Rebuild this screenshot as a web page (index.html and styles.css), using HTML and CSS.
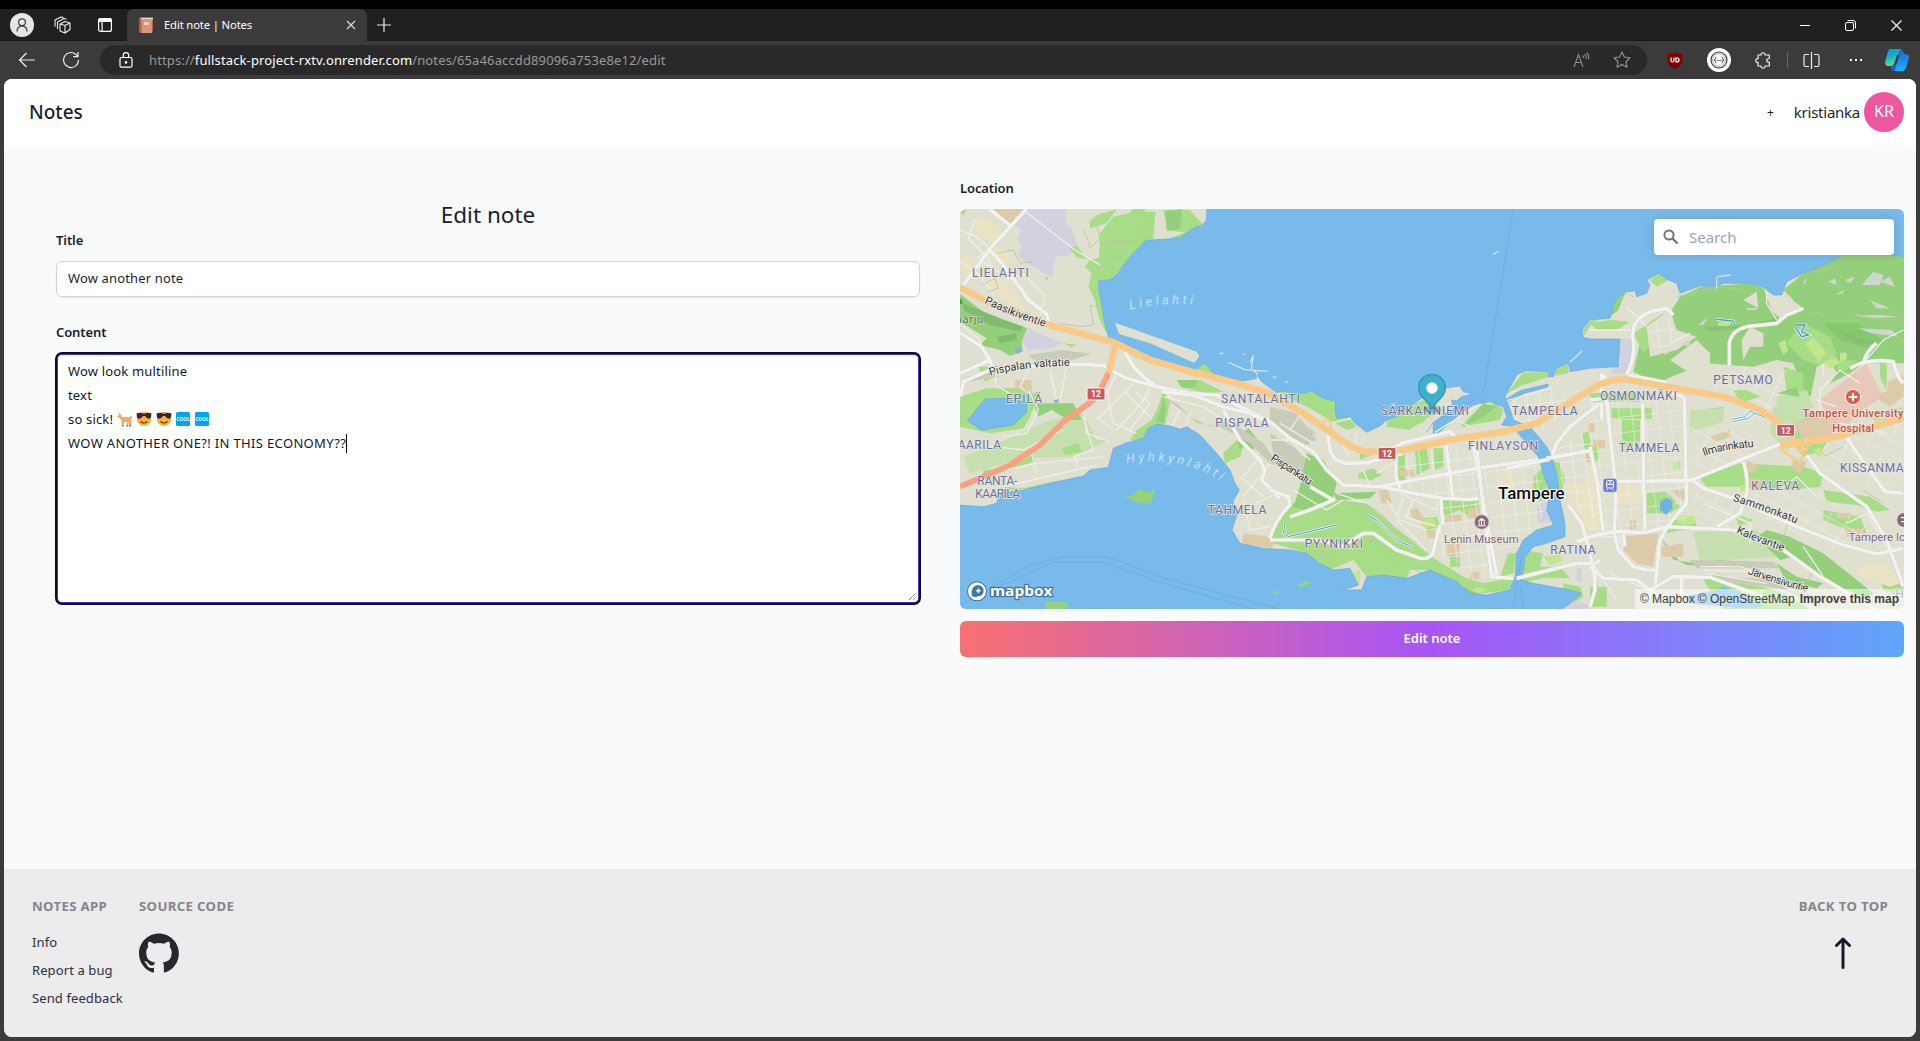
FILE: index.html
```html
<!DOCTYPE html>
<html lang="en">
<head>
<meta charset="utf-8">
<title>Edit note | Notes</title>
<link rel="stylesheet" href="styles.css">
</head>
<body>
<div class="tabstrip">
  <span class="slot s43"><svg width="24" height="24" viewBox="0 0 24 24"><circle cx="12" cy="12" r="12" fill="#e6e6e6"/><g fill="none" stroke="#444" stroke-width="1.3"><circle cx="12" cy="9.3" r="3.4"/><path d="M7 18.5c0-3.5 2-5.3 5-5.3s5 1.800 5 5.300"/></g></svg></span>
  <span class="slot s39"><svg width="17" height="18" viewBox="0 0 17 18" fill="none" stroke="#eee" stroke-width="1.1" stroke-linejoin="round"><path d="M6 8l5 1.500 5-2.500v6.500L11 17l-5-2zM11 9.500V17M6 8l5-2.500L16 7"/><path d="M3.500 13V6L10 2.500l2.500.8M1 10.500V4L7 1l2.500.6"/></svg></span>
  <span class="slot s45"><svg width="16" height="16" viewBox="0 0 16 16"><rect x="1.600" y="1.600" width="12.800" height="12.800" rx="2" fill="none" stroke="#fff" stroke-width="1.200"/><path d="M1 3.500Q1 1 3.500 1h9Q15 1 15 3.500V5H1zM4.500 4h1.200v10.500H4.500z" fill="#fff"/></svg></span>
  <div class="tab">
    <svg width="16" height="16" viewBox="0 0 16 16"><path d="M1 2Q1 0 3 0h12v13l-1 3H3q-2 0-2-2z" fill="#bd5b45"/><path d="M3 1h12v1.500H3z" fill="#e7e0e3"/><path d="M3.500 2.500H14V16H3.500z" fill="#d99678"/><path d="M6 5.500h5v2.200H6z" fill="#f7ece5"/></svg>
    <span class="tab-title">Edit note | Notes</span>
    <svg width="10" height="10" viewBox="0 0 10 10"><path d="M1 1l8 8M9 1L1 9" stroke="#ddd" stroke-width="1.100"/></svg>
  </div>
  <span class="slot s34"><svg width="14" height="14" viewBox="0 0 14 14"><path d="M7 0v14M0 7h14" stroke="#eee" stroke-width="1.200"/></svg></span>
  <span class="grow"></span>
  <span class="slot s46"><svg width="10" height="10" viewBox="0 0 10 10"><path d="M0 5.500h10" stroke="#fff"/></svg></span>
  <span class="slot s45"><svg width="11" height="11" viewBox="0 0 11 11" fill="none" stroke="#fff"><rect x=".5" y="2.500" width="8" height="8" rx="1.500"/><path d="M2.500.5H8Q10.500.5 10.500 3v5.500"/></svg></span>
  <span class="slot s47"><svg width="11" height="11" viewBox="0 0 11 11"><path d="M.5.5l10 10M10.500.5l-10 10" stroke="#fff" stroke-width="1.100"/></svg></span>
</div>
<div class="toolbar">
  <span class="slot s44"><svg width="18" height="16" viewBox="0 0 18 16" fill="none" stroke="#eee" stroke-width="1.200"><path d="M17 8H1.500M8.500 1L1.500 8l7 7"/></svg></span>
  <span class="slot s44"><svg width="18" height="18" viewBox="0 0 18 18" fill="none" stroke="#eee" stroke-width="1.200"><path d="M16.500 9a7.500 7.500 0 1 1-2.800-5.800L16 5.400M16 1v4.600h-4.800"/></svg></span>
  <div class="url">
    <svg width="14" height="16" viewBox="0 0 14 16" fill="none" stroke="#fff" stroke-width="1.200"><rect x="1" y="5.500" width="12" height="9.700" rx="1.500"/><path d="M4.300 5.500V3.300a2.700 2.700 0 0 1 5.400 0v2.200"/><circle cx="7" cy="10.400" r=".7" fill="#fff"/></svg>
    <span class="url-text">https://<b>fullstack-project-rxtv.onrender.com</b>/notes/65a46accdd89096a753e8e12/edit</span>
    <span class="grow"></span>
    <svg class="read" width="17" height="16" viewBox="0 0 17 16" fill="none" stroke="#8e8e8e" stroke-width="1.100"><path d="M1 15L5.500 2.500 10 15M2.700 10.500h5.700M9.500 3.500q1.300 1 1.300 2.800M11.500 2q2 1.600 1.900 4.800M13.600.7q2.500 2.200 2.200 6.800"/></svg>
    <svg class="star" width="18" height="18" viewBox="0 0 18 18" fill="none" stroke="#8e8e8e" stroke-width="1.200" stroke-linejoin="round"><path d="M9 1l2.400 5 5.600.8-4 3.900 1 5.600-5-2.700-5 2.700 1-5.600-4-3.900L6.600 6z"/></svg>
  </div>
  <span class="slot s45"><svg width="16" height="17" viewBox="0 0 16 17"><path d="M8 0c2 1.400 4.500 2 7.500 2v6c0 4-3 7-7.500 9C3.500 15 .5 12 .5 8V2C3.500 2 6 1.400 8 0z" fill="#800000"/><path d="M4 5.500v3q0 1.500 1.500 1.500T7 8.500v-3M9 6v4h1q2 0 2-2t-2-2z" fill="none" stroke="#fff" stroke-width="1.200"/></svg></span>
  <span class="slot s44"><svg width="26" height="26" viewBox="0 0 26 26"><circle cx="13" cy="13" r="12" fill="#fff"/><g fill="none" stroke="#333" stroke-width="1.100"><circle cx="13" cy="13" r="8"/><circle cx="13" cy="13" r="6.300" stroke-width=".4"/><path d="M10.400 10q-1 0-1 1.500T8 13q1.400 0 1.400 1.500t1 1.500M15.600 10q1 0 1 1.500T18 13q-1.400 0-1.400 1.500t-1 1.500" stroke-width=".9"/></g><path d="M11 13.500h4.600" stroke="#333" stroke-dasharray="1 .7"/></svg></span>
  <span class="slot s44"><svg width="16" height="17" viewBox="0 0 16 17" fill="none" stroke="#eee" stroke-width="1.200"><path d="M3 3h3c-.5-3 4.500-3 4 0h4.300v3.500c-3.500-.2-3.500 4 0 3.900V14H10c.5 3-4.500 3-4 0H3v-3.500C0 11 0 6.200 3 6.700z"/></svg></span>
  <i class="sep"></i>
  <span class="slot s44"><svg width="17" height="17" viewBox="0 0 17 17" fill="none" stroke="#eee" stroke-width="1.200"><path d="M8.500 0v17M6 2.500H2.500Q1 2.500 1 4v9q0 1.500 1.500 1.500H6M11 2.500h3.500Q16 2.500 16 4v9q0 1.500-1.500 1.500H11"/></svg></span>
  <span class="slot s45"><svg width="14" height="4" viewBox="0 0 14 4" fill="#eee"><circle cx="2" cy="2" r="1.200"/><circle cx="7" cy="2" r="1.200"/><circle cx="12" cy="2" r="1.200"/></svg></span>
  <span class="slot s38"><svg width="24" height="24" viewBox="0 0 24 24">
    <defs><linearGradient id="ca" x2=".3" y2="1"><stop offset="0" stop-color="#1593d0"/><stop offset=".5" stop-color="#12b3cc"/><stop offset="1" stop-color="#63db87"/></linearGradient><linearGradient id="cb" x2="0" y2="1"><stop offset="0" stop-color="#2670d8"/><stop offset="1" stop-color="#11b5ff"/></linearGradient></defs>
    <path d="M5 1h9q3 0 4 4l-6 2-3 9q-1 2-3 2H3q-3 0-3-4L3 4q.5-3 2-3z" fill="url(#ca)"/><path d="M15 1q3 0 4 5h-6z" fill="#1c72be"/><path d="M15 6h6q3 0 3 4l-3 10q-1 3-3 3H9q-2 0-3-5h2q3 0 4-3z" fill="url(#cb)"/><path d="M6 18h5l-1 5H9q-2 0-3-5z" fill="#2257dc"/></svg></span>
</div>
<div class="page">
  <header class="nav">
    <h1>Notes</h1>
    <span class="grow"></span>
    <span class="add">+</span>
    <span class="user">kristianka</span>
    <span class="avatar">KR</span>
  </header>
  <main class="main">
    <section class="form">
      <h2>Edit note</h2>
      <label>Title</label>
      <div class="input">Wow another note</div>
      <label class="lc">Content</label>
      <div class="area">
        <p>Wow look multiline</p>
        <p>text</p>
        <p class="emo"><span>so sick!</span>
          <svg width="16" height="16" viewBox="0 0 16 16"><path d="M2 1q0 2 2 2.500L5 6h8l1.500-2L15 6l-1 3v6h-2v-4l-1 4H9.500l.5-4H7l-.5 4H5l-.7-6-1.600-2L0 6l2-2.500L1 1z" fill="#f0ad69"/><path d="M5 14h1.500v1.500H5zM9.500 14H11v1.500H9.500zM12 14h2v1.500h-2z" fill="#9d6a55"/></svg>
          <svg width="16" height="16" viewBox="0 0 16 16"><circle cx="8" cy="8" r="7.200" fill="#fdb32e"/><path d="M.5 2.500q4-1.500 7.500.5 3.500-2 7.500-.5l-.5 4q-3 3-6-1.500H7q-3 4.500-6 1.500z" fill="#38204a"/><path d="M4.500 10.500q3.500 3 7 0" fill="none" stroke="#5a3410" stroke-width="1.100"/></svg>
          <svg width="16" height="16" viewBox="0 0 16 16"><circle cx="8" cy="8" r="7.200" fill="#fdb32e"/><path d="M.5 2.500q4-1.500 7.500.5 3.500-2 7.500-.5l-.5 4q-3 3-6-1.500H7q-3 4.500-6 1.500z" fill="#38204a"/><path d="M4.500 10.500q3.500 3 7 0" fill="none" stroke="#5a3410" stroke-width="1.100"/></svg>
          <svg width="16" height="16" viewBox="0 0 16 16"><rect x="1" y="1" width="14" height="14" rx="1.500" fill="#00a5ef"/><text x="8" y="9.600" class="cool">COOL</text></svg>
          <svg width="16" height="16" viewBox="0 0 16 16"><rect x="1" y="1" width="14" height="14" rx="1.500" fill="#00a5ef"/><text x="8" y="9.600" class="cool">COOL</text></svg>
        </p>
        <p class="last">WOW ANOTHER ONE?! IN THIS ECONOMY??<i class="caret"></i></p>
        <svg class="grip" width="9" height="9" viewBox="0 0 9 9"><path d="M1 8l7-7M5 8l3-3" stroke="#777" stroke-width=".8"/></svg>
      </div>
    </section>
    <section class="loc">
      <label>Location</label>
      <div class="map">
<svg class="mapsvg" viewBox="0 0 2832 1200" preserveAspectRatio="none">
<defs>
<pattern id="grid" width="38" height="46" patternUnits="userSpaceOnUse" patternTransform="rotate(-7)"><path d="M0 0H38M0 0V46" stroke="#f0f0e9" stroke-width="4" fill="none"/></pattern>
<pattern id="grid2" width="54" height="42" patternUnits="userSpaceOnUse" patternTransform="rotate(28)"><path d="M0 0H54M0 0V42" stroke="#efefe8" stroke-width="4" fill="none"/></pattern>
</defs>
<rect width="2832" height="1200" fill="#dfe0d0"/>
<!-- western shore -->
<g transform="translate(-30 -117)">
  <path class="lav" d="M230 117H345L350 165 365 175 383 230 360 255 318 260 305 322 250 290 205 262 215 225 200 205 215 180 190 160ZM235 475L300 505 345 520 290 538 235 540 215 515Z"/>
  <path class="bei" d="M80 140L120 150 155 190 130 220 70 180ZM120 220l60 30 25 30-50 5-40-25zM100 310l60 20 50 60-20 20-80-60zM40 250l40 20-20 60-30-30zM190 385l40 30-20 15z"/>
  <path class="bro" d="M130 117H220L178 165ZM195 630h50v38h-50z"/>
  <path class="park" d="M450 190L490 140 540 128 550 117H585V125H617L609 208 587 211 545 255 518 288 505 310 480 330 447 331 446 360 455 400 490 408 458 412 470 480 480 510 445 440 435 390 415 350 425 310 405 290 420 270 447 265ZM418 155L440 135 500 118 470 160 420 175ZM357 233l25-5 30 40-30-5zM640 120l80 0 40 45-55 22-50-5zM660 205l100-40-20 15-45 25zM30 125l20-8-10 20zM735 598l30-20 30 38zM680 630l70 0 70 35-50 5-80-20zM340 520l40 5-15 7zM30 680l80-25 80 0 45 10v25H30zM85 590l40 0 20 25-40 20zM285 318l10 5-5 10z"/>
  <path class="wood" d="M30 372L100 425 232 475 215 515 218 545 180 558 150 540 90 525 110 505 30 455ZM645 125l50-8-5 60-40 5zM680 630l60 0 0 20-40 5z"/>
  <path d="M40 400l120 50 60 20-10 15-90-20-80-45zM140 500l60-10 0 20-50 10z" fill="#82bb6d"/>
  <path class="shade" d="M235 555l100-15 90 12-60 18-100 10zM50 620l80-12 20 12-90 14z"/>
  <path class="min" d="M30 180L80 200 118 235M75 145l-20 60 60 60 20 60M118 235l-35 30 90 60 50-10 60 60-10 60M220 120L375 240 450 285M30 275l60 40 40 60M170 335l30-40M30 460l60 50 20 60M140 595l-5 50 80 45M240 590l-30 60 50 40M300 600l20 90M350 590l-20 100M500 610l-40 80M550 640l-50 50M600 650l-20 40M640 660l30 30"/>
  <path class="trail" d="M400 175l15 40 5 20 30-30-10-40M480 220l30-5 15 30-30 25-15-30M480 210l80 5 10-40 40-20M330 460l60 10 40-5-10-60 30 10M95 345l40-20 10 30-30 10M140 250l50-10 20 40 40-5M440 265l70 35"/>
  <path class="road" d="M230 117L118 238 85 285 38 348M118 117L178 165M118 238L160 285 215 360 235 390 290 432 295 455"/>
  <path class="road" d="M30 488L95 530 120 570 125 590M30 610L120 570M30 690L40 635 120 600 360 582 460 586 500 610 530 625 620 650 720 670 800 675 990 770M525 545L550 590 580 620 620 650 720 672" stroke-width="8"/>
</g>
<g transform="translate(-30 543)">
  <path class="pale" d="M110 175L300 90 400 70 440 150 480 150 370 200 220 205 60 250 40 200Z"/>
  <path class="park" d="M30 20L90 10H270L240 80 220 115 120 130 30 110ZM640 0l20 40-15 65-30 0-30 45-45 0 15-25 50-35 20-40zM820 190l40-40 20 20-10 30-45 20zM160 290l60 5 110-25-60 25-100 5zM335 175l50-15 10 25-50 10zM100 240l60-5 90-40 0 20-90 30-60 20z"/>
  <path class="wood" d="M640 10l8 40-5 50-25-5 15-40zM865 140l30-25 25 30-10 35-25-10-20 5zM250 40l120 0 25 50-40 0-50-30-40 20z"/>
  <path class="min" d="M235 0L265 60 230 130 160 140M30 160l100 10 90 10 120-60M240 170l20 80M400 50l10 80 70 25M440 80l50 40M110 250l150-30 200-20M160 290L440 225M380 200v40M400 80l30 100-60 20M470 0l20 100 70 30M500 30l-60 60M520 0l80 80M600 10l-100 110M560 10l40 30-60 80M690 60l-30 60M720 70l-20 50M640 20l120 30 60 40M870 260l70 60M960 220l-80 100M880 330l20 90 60-10M900 350l80-40M930 200l-50 60"/>
  <path class="shade" d="M640 20l80 60 60 30 60-20 40 30 60 40 50 70-30-10-60-60-90-50-70-10-60-60z"/>
  <path class="road" d="M635 5L730 15 820 50 900 70 960 100 990 120M820 60L870 150 930 210 945 240 935 270 990 325" stroke-width="8"/>
  <path class="bro" d="M880 430l40 5 60 10-15 30-90-15z"/>
</g>
<!-- central Tampere -->
<g transform="translate(930 543)">
  <path class="shade" d="M0 50l80 20 60 80-40 20-100-80zM0 130l70 40 110 110 10 30-60-20-120-100zM0 60l50 10 90 60-30 5z"/>
  <path class="park" d="M20 0H190L200 40 260 110 230 120 180 90 120 55 50 20ZM60 340L190 330 290 340 360 400 460 480 500 510 580 560 640 580 740 560 720 600 600 615 560 575 480 540 420 540 410 565 290 560 250 510 180 540 110 490 10 460 0 440ZM350 80L420 40 480 30 520 60 440 100 420 120 350 110ZM570 110L630 50 680 40 700 60 690 90ZM380 190l25-15 0 95-20 5zM435 180l35-5 10 60-40 20zM490 175l30 0 0 55-25 10zM510 330h115l5 35-40 10-20-15-40 15h-15zM265 250l45-15 25 20-30 15-40-5zM460 385l40-5 10 30-40 10-15-20zM790 260l30-30 10 60-20 50-20-30zM840 210l30 10 15 50-20 60-15-50zM760 480l60 10-10 40 60 0 30 35-80 0-70 15zM880 580l50 10 10 30-30 20-30-30zM270 180l90-10-90 40zM540 500l30 0 0 30-30 0zM715 490l25 0-10 60-40 10zM965 170l20 0 0 40-20 10zM935 130l20-5 10 50-20 10z"/>
  <path class="wood" d="M110 190L160 210 200 280 190 320 120 365 70 350 90 290ZM430 540l70 20 100 40 60 0-60 15-60-30zM640 40l40 10-40 30-60 30zM190 310l130-5-20 20-100 5z"/>
  <path class="bro" d="M325 300h30l10 40h-30zM420 360l20-8 20 30-5 15-30-15zM470 420h25v25h-25zM525 375h50v22h-50zM595 355h35v30h-35zM530 460h38v38h-38zM600 545h28v22h-28zM945 185h25v30h-25zM955 105h22v20h-22zM388 240h45v18h-45z"/>
  <path class="bei" d="M700 235l20 5 20 60 30 5 0 30-50-10-30-40zM880 280l90-5 20 90-60 10-40-60zM930 370h60v60l-40-10z"/>
  <path class="lav" d="M800 345l35-10 10 60-40 5zM900 630l60 15-20 15h-60zM920 535h15v40h-15z"/>
  <path class="ltg" d="M455 390l35-5 10 20-35 10zM820 500l50-8 10 20-40 12zM250 545l20-5 0 40-15 10zM600 600l30-8 25 8-30 10z"/>
  <path d="M380 190L610 165 660 560 590 575 570 520 510 500 510 330 390 290ZM640 240L800 210 830 340 800 420 740 480 680 480Z" fill="url(#grid)"/>
  <path d="M870 150l100-40 20 280-60-20-60-100zM720 0h270l-100 60-90 80-80-60z" fill="url(#grid)"/>
  <path class="min" d="M200 140l40 60M260 130l-10 60M180 100l170-40M320 250l60-40M300 290l-20-50M390 310l110 50 10-30M350 330l40 60 80 30M400 320l-20 60M430 330l-20 50M200 310l90 30M400 380l100 30M380 390l90 90M560 90l40 20M70 300l100 60 50-30M0 150l60 0 60 60M30 100l100 60M100 60l-40 60"/>
  <path class="trail" d="M220 330l100 30 60 60 60 40M290 450l60 20 30 60M30 380l40-10M120 490l60 10"/>
  <path d="M45 403L40 430 55 440 200 405M290 375L320 390 380 450 430 473" fill="none" stroke="#f5f8fa" stroke-width="7"/><path d="M45 403L40 430 55 440 200 405M290 375L320 390 380 450 430 473" fill="none" stroke="#4698d2" stroke-width="3"/>
  <path class="road" d="M170 110L180 180Q190 215 230 220L290 218 400 190M370 175L400 158 540 125 560 145" stroke-width="12"/>
  <path class="road" d="M0 95L60 145 130 185 170 240 220 285 330 290 430 270 620 235 690 225 830 205 960 182 990 300M330 290L430 310 520 325 600 328 625 325M610 170L680 555M378 180V260L390 295M528 165L548 320M513 325L518 405M845 200L860 160 900 110 990 40" stroke-width="8"/>
  <path class="road" d="M0 445Q15 390 60 345L55 320 0 300M0 450L150 450 215 470 280 430 310 430 380 480 450 505Q490 510 493 470L510 405M60 380L120 360 190 330 120 290" stroke-width="6"/>
  <path class="road" d="M620 175L635 310 665 560 730 565 920 520 960 520 990 555M895 345L935 400 955 470 975 560 970 640M920 455L990 430M965 530l25-20" stroke-width="12"/>
</g>
<!-- northeast -->
<g transform="translate(1890 -27)">
  <path class="wood" d="M270 290L330 262 480 250 520 265 545 330 570 360 610 300 580 270 640 220 760 165 942 165V490H820L780 520 700 560 685 600 640 580 610 490 560 480 490 500 350 490 270 520 200 550 130 515 150 430 170 380 240 340ZM60 350l15-50 30-20-20 50z"/>
  <path class="park" d="M180 240L205 220 235 240 200 260ZM130 400l90-60 0 60-60 60zM590 430L640 370 720 410 740 460 700 500 640 480ZM870 490l20 0 0 80-20-40zM750 480h50l-30 30h-30zM580 500l60 20 0 100-30 0-20-40zM0 370l60-10 60 5-40 25-60 0z"/>
  <path d="M700 370l100 0 80 50-40 30-90-30z" fill="#85c96c"/>
  <path d="M170 380l70-50 20 60 60 20-60 40-80 20zM480 380l40 20 0 40-40 0-20 40-5-60zM240 480l80-60 40 40 0 40-60 20zM540 285l60 10 40 30-60 30zM460 300l40-25 5 50zM680 500l40-20 20 40-40 60-20 60-20-40z" fill="#dfe0d0"/>
  <path d="M815 255l35-40 30 10-10 30zM870 245l30-15 15 30zM715 245l20-10 5 20zM640 250l10-20-5 25zM765 240l30-10-15 20zM790 345l80 0 60 5-90 5zM805 385l100 5 20 20-80-10zM470 325h30v5h-30zM325 375l30-25-15 25zM270 430l35-10-10 20zM735 285l25-15 0 10zM840 300l60 25-40 0zM210 460l30-5-10 8z" fill="#cfd5cf"/>
  <path class="ltg" d="M645 430l25-20 40 50-25 25zM700 485l30-22 20 25-30 20zM750 458h20v20l-20 8zM565 430l20-10 10 30-15 15zM385 365l40 0-10 15-30-2z"/>
  <path class="lav" d="M90 417h35l0 60-20 45-40 0 0-20 25-5z"/>
  <path class="pink" d="M690 600L830 490 880 590 800 640 760 700 710 650Z"/><path class="bro" d="M895 545l47-20v50l-40 20-10-20z"/>
  <path class="pale" d="M550 620l60 0 40 30 0 60-60 40-50-50zM840 640l100-20v30l-80 30z"/>
  <path d="M340 380l120-5 80-15 30-15-20 30-190 20zM740 390l60 20 70 20-70 0z" fill="#84b774" opacity=".6"/>
  <path class="trail" d="M260 290l120-30 80 10M680 220l80-35 150 0M80 310l30-30 20 10M660 340q30-10 40 10M700 430l30 20 0 30M690 490l60-30M930 360l-60 0-80-20"/>
  <path d="M170 380l70-30 20 80-70 25z" fill="url(#grid)"/><path d="M350 560l110-60 130 10 0 50-50 70-180-50z" fill="url(#grid2)"/>
  <path class="min" d="M110 320l60 60M0 390h120M700 490v40M690 570l60-60 60 40M690 560v80M300 400l-60 30M560 360l-30-50 0-40M820 490l60-70 60-30M680 600l60 20"/>
  <path class="road" d="M110 525Q140 460 128 410L130 385Q140 350 180 335L230 325 250 345M35 523L60 550M35 520V660" stroke-width="11"/>
  <path class="road" d="M418 495V430Q425 390 470 380L560 370 590 345 640 325M780 505Q820 480 880 482L910 485Q920 530 940 550M115 525L230 548M820 490Q830 450 860 430" stroke-width="6"/>
  <path d="M380 358l20 2 30 3 5 12M615 375l30 0-10 20 20 10-20 5-20-30" fill="none" stroke="#f5fafa" stroke-width="8"/><path d="M380 358l20 2 30 3 5 12M615 375l30 0-10 20 20 10-20 5-20-30" fill="none" stroke="#4698d2" stroke-width="4"/>
</g>
<!-- east and southeast -->
<g transform="translate(1890 543)">
  <path class="park" d="M0 10h150v25H0zM65 55h120v32H65zM95 90h55v65H95zM330 265L450 220 640 230 700 250 690 290 600 300 460 290 350 290ZM170 310l60-5 40 45-30 20-70 0zM660 60l80 60-40 60-60 20-40-50zM700 300l140 20 60 40-40 5-60-20-90-10zM330 60l70-10 0 40-70 10zM700 360l110 20 20 50-30 0-100-40zM430 0l40 0 40 20-60 20zM0 590h50v60H0zM250 380l60 0 10 30-90 20zM430 370l60 20-40 20zM870 550l70 40v30l-60-20zM380 550l200 60 100 60-280-10-60-90z"/>
  <path class="pale" d="M310 425L500 420 570 500 400 510 330 515ZM560 20l90-20 20 50-60 70-50-30zM300 60l100-5 0 40-100 30z"/>
  <path class="wood" d="M530 420L600 440 700 490 850 610 830 625 700 570 610 500 570 510 500 440ZM560 520l60 40 80 20-20 15-90-20zM210 440l40 70 70 10 70-10 120 10-30 15-190-10-20-10zM560 10l60-20 10 30z"/>
  <path class="bro" d="M100 440L205 430 195 490 190 530 140 520 100 480ZM215 470l65-10 0 40-65 0zM610 100L700 70 760 110 700 150 640 150ZM470 210l20 10 15 15-20 15-15-10zM480 265l40 5-10 30-30 0zM610 205l40 10-20 35-25-15zM245 300h45v30h-15zM360 140l60-20 5 20-50 15zM120 390h18v30h-18zM855 20l85-40v40l-40 30zM770 415h50v25h-50zM740 370h45v15h-45zM10 150h35v25H10zM0 100h15v25H0z"/>
  <path class="bei" d="M0 230h15v110H0zM80 285h75v55H80zM810 530l80-10 40 60-30 10-90-30z"/>
  <path class="ltg" d="M90 155h40v25H90zM265 375l50 5-5 25-50-5zM250 215h20v22h-20zM670 180l20-8 15 20-20 10zM470 600h50v35h-50zM450 285l20 2 0 15-20 2z"/>
  <path class="shade" d="M300 510l250 5 20 20-250 0zM380 560l200 10 110 60-20 5-100-40-180-20z"/>
  <path d="M0 20h290v400H0z" fill="url(#grid)" opacity=".8"/>
  <path d="M310 300l120 10 110 80-100 30-120-10zM480 300l200 0 150 110 0 70-60 10-300-120z" fill="url(#grid2)" opacity=".8"/>
  <path d="M700 100h240v180l-80 20-150-60zM300 100l130 20 120 30-80 50-150 50z" fill="url(#grid2)" opacity=".8"/>
  <path class="trail" d="M650 500q30 40 0 80M820 300l60 40M600 380l-20 60 60 20M700 200l60-30"/>
  <path class="min" d="M330 530l120 0 180 60M340 540l140 5 140 60M350 550l180 30M0 440l90 0 10 60M20 540l60 90M60 550l140 60M700 180l50-80 140 30M770 400l60-30 60 100M570 300l50-40 60 60M340 340l140 60 0 60M640 470l60 90"/>
  <path class="road" d="M50 30L60 130 75 270 78 330 72 430 85 480 130 530 170 540 195 540M283 20L288 270 290 340 240 400Q200 450 205 500L195 590 180 610M65 275L290 272 310 268 450 210 575 160M310 272L340 295 430 325 620 410 760 465 860 492 940 475M650 195L690 250 830 350 890 450 940 590M0 440L70 425 170 427 230 410 430 420 580 480 690 560 860 660" stroke-width="13"/>
  <path class="road" d="M0 170L20 270 40 425M158 40L160 240 165 420M0 30L40 25M460 215Q475 260 470 310L450 370 380 410M280 20L245 10M765 135L830 230 885 305 940 310M0 530L40 565 140 570 180 600 250 560 360 562 520 620M10 520L15 600 0 650M275 565V650M100 430l5 40" stroke-width="7"/>
  <path d="M210 335l20-12 18 10-2 25-18 16-18-14z" fill="#6fb3e6"/>
  <path d="M280 620L380 600 400 590 450 605 520 650 460 655 300 640Z" fill="#78bbeb"/>
  <path d="M425 88l40-8 15-18 20 10 25 10M430 95l45-10 20-15" fill="none" stroke="#f5fafa" stroke-width="8"/><path d="M425 88l40-8 15-18 20 10 25 10M430 95l45-10 20-15" fill="none" stroke="#4698d2" stroke-width="2.500"/>
</g>
<!-- lakes and river -->
<g fill="#78bbeb" stroke="#6aa6e6" stroke-width="2" stroke-linejoin="round">
<path d="M740-5L740 33 725 51 705 55 660 86 610 91 557 94 515 138 488 171 475 193 450 213 417 214 416 243 425 283 432 333 448 391 485 403 520 433 570 448 650 468 705 481 735 463 765 498 830 513 850 516 890 508 885 488 905 518 950 551 970 546 1015 556 1055 546 1090 568 1127 578 1125 603 1130 628 1170 623 1185 643 1220 670 1260 651 1280 633 1320 618 1340 598 1385 568 1450 538 1500 531 1510 548 1538 555 1505 563 1490 575 1475 573 1480 600 1450 618 1420 643 1420 673 1440 668 1490 623 1540 588 1590 578 1630 593 1640 623 1625 648 1650 650 1670 668 1705 708 1735 743 1750 793 1770 853 1760 903 1780 948 1730 963 1690 993 1670 1033 1665 1103 1650 1143 1580 1158 1530 1153 1490 1118 1410 1083 1340 1108 1270 1098 1220 1103 1205 1143 1150 1143 1195 1128 1170 1078 1120 1083 1080 1063 1040 1033 990 1023 910 1018 840 1003 816 963 832 913 818 878 838 843 825 823 810 783 770 733 720 678 680 653 660 661 630 651 590 646 565 658 550 688 500 701 460 718 445 775 390 783 370 801 270 823 190 843 120 853 110 883 70 893-5 888V1205H1800L1830 1183 1865 1153 1830 1143 1720 1123 1685 1113 1695 1043 1720 1013 1760 1003 1815 983 1815 943 1800 873 1790 793 1775 743 1760 713 1710 653 1660 633 1650 600 1635 563 1670 498 1695 485 1763 488 1763 503 1780 503 1790 478 1825 463 1830 488 1890 478 1975 473 1980 390 1890 390 1870 385 1866 363 1890 333 1950 328 1965 273 2000 248 2025 245 2030 263 2060 253 2070 228 2060 213 2095 193 2125 213 2150 223 2160 253 2220 231 2270 233 2290 223 2370 223 2410 235 2440 258 2465 258 2480 218 2530 193 2590 168 2650 138 2800 138 2837 143V-5Z"/>
<path d="M22 635L75 570 130 568 200 580 200 610 160 648 65 663ZM165 423l12-5 8 6-10 8zM282 575l12-3 2 6-10 3z"/>
<path d="M1635 573L1680 545 1765 525 1762 534 1690 554 1640 580Z"/>
</g>
<path d="M465 341L710 428 718 443 702 461 570 403 477 375Z" fill="#dfe0d0"/>
<path d="M490 864L520 860 535 842 570 850 583 840 580 865 570 883 540 883ZM257 1180H320L325 1190 315 1200H260ZM940 1155l15-8 5 8zM935 1150l25-8-5 10zM1010 1130l30-15 15 8-30 10z" fill="#97d27b"/>
<path d="M1335 605L1400 568 1425 600 1390 640 1355 655 1310 638ZM1640 555L1690 490 1763 490 1763 504 1680 532ZM1785 500L1790 480 1825 465 1825 492ZM1867 365l25-30 25-4-25 18-18 30z" fill="#a7dd86"/>
<path d="M1640 575L1780 535M1425 670L1560 585" class="min"/>
<path d="M1660 0L1572 540 1540 575 1420 640 1400 670M0 1190L215 1067 310 1043H440L620 1110 960 1200M100 1140L280 1060H430L600 1120 880 1200M1685 1040L1675 1110 1660 1190M1680 1130L1690 1200" fill="none" stroke="#62a4e8" stroke-width="2"/>
<path d="M780 432l10 2M850 436l6 1M938 503l12 3M975 518l8 3M1600 136l14-10M1830 460l36-34M805 460l50 22 70 5M870 460l10-20-6 40 20 15M2270 240v-35M2273 203l40-5" fill="none" stroke="#d4e4e8" stroke-width="4"/>
<!-- arterials -->
<g class="road"><path stroke-width="12" d="M1640 778L1770 750M1760 748L1850 732M1670 1108L1850 1063"/></g>
<g fill="none" stroke-linejoin="round"><path d="M0 235L80 277 260 346 460 400 570 453 690 488 830 523 930 555 1030 613 1130 683Q1180 722 1220 728L1330 723 1470 693 1630 668 1730 643 1890 543Q1940 510 1990 510L2090 528 2290 563 2390 598 2440 628 2530 728M2460 708L2600 690 2832 628M465 410L445 493" stroke="#ead1a8" stroke-width="21"/><path d="M0 235L80 277 260 346 460 400 570 453 690 488 830 523 930 555 1030 613 1130 683Q1180 722 1220 728L1330 723 1470 693 1630 668 1730 643 1890 543Q1940 510 1990 510L2090 528 2290 563 2390 598 2440 628 2530 728M2460 708L2600 690 2832 628M465 410L445 493" stroke="#fac986" stroke-width="17"/><path d="M445 493L420 545 400 573 310 638 240 708 150 768 0 833" stroke="#ff9e80" stroke-width="17"/><path d="M2460 715l20 20 40 25 30-60M1090 640q30-30 20 40" stroke="#fac986" stroke-width="7"/></g>
<!-- place names -->
<g class="place">
<text x="36" y="203" textLength="170">LIELAHTI</text><text x="138" y="583" textLength="108">EPILÄ</text><text x="-7" y="720" textLength="130">AARILA</text><text x="52" y="828" textLength="120">RANTA-</text><text x="46" y="867" textLength="134">KAARILA</text><text x="783" y="582" textLength="236">SANTALAHTI</text><text x="766" y="653" textLength="160">PISPALA</text><text x="743" y="915" textLength="176">TAHMELA</text><text x="1262" y="618" textLength="264">SÄRKÄNNIEMI</text><text x="1655" y="618" textLength="198">TAMPELLA</text><text x="1524" y="722" textLength="210">FINLAYSON</text><text x="1034" y="1017" textLength="175">PYYNIKKI</text><text x="1771" y="1036" textLength="136">RATINA</text><text x="1920" y="574" textLength="230">OSMONMÄKI</text><text x="2260" y="525" textLength="178">PETSAMO</text><text x="1976" y="730" textLength="182">TAMMELA</text><text x="2374" y="843" textLength="144">KALEVA</text><text x="2640" y="789" textLength="216">KISSANMAA</text><text x="2806" y="1166">H</text>
</g>
<defs><path id="pa" d="M72 282Q160 325 268 358"/><path id="pv" d="M90 500Q190 472 345 470"/><path id="pk" d="M930 753Q1000 797 1060 838"/><path id="il" d="M2232 741Q2290 720 2395 713"/><path id="sa" d="M2318 876Q2400 900 2520 948"/><path id="ka" d="M2328 971Q2390 1000 2485 1032"/><path id="ja" d="M2362 1094Q2450 1125 2555 1153"/><path id="li" d="M510 302Q610 278 715 287"/><path id="hy" d="M500 763Q680 735 800 829"/></defs>
<g class="street"><text><textPath href="#pa" textLength="196">Paasikiventie</textPath></text><text><textPath href="#pv" textLength="242">Pispalan valtatie</textPath></text><text><textPath href="#pk" textLength="140">Pispankatu</textPath></text><text><textPath href="#il" textLength="152">Ilmarinkatu</textPath></text><text><textPath href="#sa" textLength="202">Sammonkatu</textPath></text><text><textPath href="#ka" textLength="152">Kalevantie</textPath></text><text><textPath href="#ja" textLength="188">Järvensivuntie</textPath></text></g>
<g class="lake"><text><textPath href="#li" textLength="190">Lielahti</textPath></text><text><textPath href="#hy" textLength="293">Hyhkynlahti</textPath></text></g>
<text class="harju" x="-14" y="341" textLength="84">harju</text>
<circle cx="0" cy="278" r="8" fill="#56a625"/>
<text class="city" x="1614" y="871" textLength="200" lengthAdjust="spacingAndGlyphs">Tampere</text>
<g class="poi"><text x="1452" y="1002" textLength="224">Lenin Museum</text><text x="2666" y="995" textLength="187">Tampere Ice</text></g>
<g class="hosp"><text x="2528" y="625" textLength="302">Tampere University</text><text x="2617" y="669" textLength="125">Hospital</text></g>
<circle cx="2679" cy="564" r="23" fill="#d6614a" stroke="#fff" stroke-width="3"/><path d="M2679 551v26M2666 564h26" stroke="#fff" stroke-width="6"/>
<circle cx="1565" cy="939" r="22" fill="#856c79" stroke="#e7e0df" stroke-width="2"/><path d="M1553 935l12-8 12 8zM1553 949h24v3h-24zM1556 937h3v10h-3zM1563 937h3v10h-3zM1571 937h3v10h-3z" fill="#fff"/>
<circle cx="2832" cy="933" r="22" fill="#856c79" stroke="#eee" stroke-width="2"/><path d="M2823 926h12v12h-12" fill="none" stroke="#fff" stroke-width="4"/>
<rect x="1929" y="808" width="42" height="42" rx="8" fill="#6c7bd1" stroke="#e9eafa" stroke-width="2"/><rect x="1940" y="815" width="20" height="22" rx="3" fill="none" stroke="#fff" stroke-width="3"/><path d="M1950 815v11M1940 826h20M1943 838l-3 6M1957 838l3 6" stroke="#fff" stroke-width="3"/>
<g class="shield"><rect x="381" y="537" width="54" height="36" rx="5"/><text x="408" y="565">12</text><rect x="1254" y="715" width="54" height="36" rx="5"/><text x="1281" y="743">12</text><rect x="2450" y="646" width="54" height="36" rx="5"/><text x="2477" y="674">12</text></g>
<!-- marker -->
<ellipse cx="1416" cy="602" rx="26" ry="11" fill="#000" opacity=".13"/><path d="M1416 600C1405 575 1376 565 1376 536A40 40 0 0 1 1456 536C1456 565 1427 575 1416 600Z" fill="#3fb1ce" stroke="#3196b0" stroke-width="4"/><circle cx="1416" cy="537" r="17" fill="#fff"/>
<!-- wordmark -->
<g><circle cx="51" cy="1147" r="27" fill="#4e87b2" fill-opacity=".8" stroke="#3f759f" stroke-width="6"/><circle cx="51" cy="1147" r="27" fill="#fff"/><path d="M36 1162Q30 1130 54 1128A17 17 0 0 1 54 1162Q46 1166 36 1162Z" fill="#3d79a6"/><path d="M55 1136l3 6 6 3-6 3-3 6-3-6-6-3 6-3z" fill="#fff"/><text class="word" x="90" y="1161" textLength="187" lengthAdjust="spacingAndGlyphs">mapbox</text></g>
</svg>
        <div class="search"><svg width="16" height="16" viewBox="0 0 16 16" fill="none" stroke="#757575"><circle cx="6" cy="6" r="4.600" stroke-width="2"/><path d="M9.500 9.500l5 5" stroke-width="2.400"/></svg><span>Search</span></div>
        <div class="attrib"><span>© Mapbox</span><span>© OpenStreetMap</span><b>Improve this map</b></div>
      </div>
      <div class="button">Edit note</div>
    </section>
  </main>
  <footer class="foot">
    <div class="col c1"><h3>NOTES APP</h3><a>Info</a><a>Report a bug</a><a>Send feedback</a></div>
    <div class="col"><h3>SOURCE CODE</h3><svg class="gh" width="40" height="40" viewBox="0 0 98 96"><path fill="#24292f" fill-rule="evenodd" d="M48.854 0C21.839 0 0 22 0 49.217c0 21.756 13.993 40.172 33.405 46.690 2.427.490 3.316-1.059 3.316-2.362 0-1.141-.080-5.052-.080-9.127-13.590 2.934-16.420-5.867-16.420-5.867-2.184-5.704-5.420-7.170-5.420-7.170-4.448-3.015.324-3.015.324-3.015 4.934.326 7.523 5.052 7.523 5.052 4.367 7.496 11.404 5.378 14.235 4.074.404-3.178 1.699-5.378 3.074-6.600-10.839-1.141-22.243-5.378-22.243-24.283 0-5.378 1.940-9.778 5.014-13.200-.485-1.222-2.184-6.275.486-13.038 0 0 4.125-1.304 13.426 5.052a46.970 46.970 0 0 1 12.214-1.630c4.125 0 8.330.571 12.213 1.630 9.302-6.356 13.427-5.052 13.427-5.052 2.670 6.763.970 11.816.485 13.038 3.155 3.422 5.015 7.822 5.015 13.200 0 18.905-11.404 23.060-22.324 24.283 1.780 1.548 3.316 4.481 3.316 9.126 0 6.600-.080 11.897-.080 13.526 0 1.304.890 2.853 3.316 2.364 19.412-6.520 33.405-24.935 33.405-46.691C97.707 22 75.788 0 48.854 0z"/></svg></div>
    <span class="grow"></span>
    <div class="col top"><h3>BACK TO TOP</h3><svg width="16" height="32" viewBox="0 0 16 32"><path d="M8 30.500V2M1.500 8.500L8 2l6.500 6.500" fill="none" stroke="#18182f" stroke-width="3" stroke-linecap="round" stroke-linejoin="round"/></svg></div>
  </footer>
</div>
</body>
</html>
```
FILE: styles.css
```css
* { box-sizing: border-box; }
html { height: 100%; overflow: hidden; }
body { margin: 0; padding-top: 9px; height: 1041px; overflow: hidden; background: linear-gradient(#000 9px, #3b3b3b 9px); font-family: "Noto Sans", "Open Sans", sans-serif; color: #1a1f2b; }
h1, h2, h3, p { margin: 0; font-weight: 400; }
svg { display: block; flex: none; }
.grow { flex: 1; }
.slot { display: flex; align-items: center; justify-content: center; flex: none; }
.s34 { width: 34px; } .s38 { width: 38px; } .s39 { width: 39px; } .s43 { width: 43px; } .s44 { width: 44px; } .s45 { width: 45px; } .s46 { width: 46px; } .s47 { width: 47px; }

.tabstrip { display: flex; height: 32px; background: #202020; box-shadow: inset 0 -1px #181818; }
.tab { width: 240px; display: flex; align-items: center; padding: 0 11px; background: #3b3b3b; border-radius: 7px 7px 0 0; color: #fff; }
.tab-title { flex: 1; padding: 0 0 2px 10px; font-size: 11.3px; letter-spacing: -.16px; }
.toolbar { display: flex; align-items: center; height: 38px; padding: 0 4px 0 5px; }
.url { flex: 1; height: 30px; margin: 0 5px 0 7px; padding: 0 16px 0 19px; border-radius: 15px; background: #292929; display: flex; align-items: center; color: #9a9a9a; }
.url-text { padding-left: 16px; font-size: 13px; letter-spacing: .13px; white-space: nowrap; }
.url b { font-weight: 400; color: #fff; }
.read { margin-right: 23px; }
.sep { width: 1px; height: 16px; margin: 0 1px 0 2px; background: #666; }

.page { margin: 0 4px; height: 958px; border-radius: 8px; overflow: hidden; background: #f9fafc; display: flex; flex-direction: column; }
.nav { height: 66px; flex: none; padding: 0 12px 0 25px; background: #fff; display: flex; align-items: center; }
.nav h1 { font-size: 19px; font-weight: 500; }
.add { font-size: 12px; margin-right: 20px; }
.user { font-size: 15px; letter-spacing: -.25px; margin-right: 4px; }
.avatar { width: 40px; height: 40px; border-radius: 50%; background: #ee569f; color: #fff; font-size: 16px; line-height: 38px; text-align: center; }

.main { flex: 1; display: flex; align-items: flex-start; padding: 34px 12px 0 52px; gap: 40px; }
.form { width: 864px; padding-top: 20px; display: flex; flex-direction: column; }
.form h2 { text-align: center; font-size: 22.5px; line-height: 31px; margin-bottom: 1px; }
label { font-size: 13px; line-height: 19px; font-weight: 600; letter-spacing: -.1px; margin-bottom: 11px; }
.input { height: 36px; border: 1px solid #d1d5db; border-radius: 6px; background: #fff; padding: 0 11px; font-size: 13px; letter-spacing: .14px; line-height: 33px; box-shadow: 0 1px 2px #0001; }
.lc { margin-top: 26px; }
.area { position: relative; height: 251px; outline: 2px solid #10101a; outline-offset: -1px; border: 2px solid #4036dc; border-radius: 6px; background: #fff; padding: 4px 10px; font-size: 13px; line-height: 24px; letter-spacing: .17px; color: #111827; }
.area p { height: 24px; display: flex; align-items: center; }
.area .last { letter-spacing: .34px; }
.emo { gap: 3.200px; }
.emo span { margin-right: 1px; }
.cool { font: bold 4.700px "Open Sans", sans-serif; letter-spacing: 0; fill: #fff; text-anchor: middle; }
.caret { width: 1px; height: 19px; background: #000; }
.grip { position: absolute; right: 1px; bottom: 1px; }

.loc { width: 944px; display: flex; flex-direction: column; }
.map { position: relative; height: 400px; border-radius: 6px; overflow: hidden; }
.mapsvg { width: 944px; height: 400px; font-family: Roboto, sans-serif; }
.search { position: absolute; top: 10px; right: 10px; width: 240px; height: 36px; border-radius: 4px; background: #fff; box-shadow: 0 0 10px 2px #0000001a; display: flex; align-items: center; padding-left: 9px; gap: 10px; color: #9ca3af; font-size: 15px; }
.attrib { position: absolute; right: 0; bottom: 0; height: 20px; background: #ffffff80; font: 12px/20px "Liberation Sans", sans-serif; color: #404040; padding: 0 5px; display: flex; gap: 3px; white-space: nowrap; }
.attrib b { margin-left: 2px; }
.button { height: 36px; margin-top: 12px; border-radius: 6px; background: linear-gradient(90deg, #f87171, #a855f7, #60a5fa); color: #fff; text-align: center; font-size: 13px; line-height: 35px; font-weight: 600; }

.park { fill: #a7dd86; } .wood { fill: #94d07b; } .pale { fill: #c5dfae; } .ltg { fill: #c1e78d; }
.lav { fill: #d1d1e0; } .bei { fill: #e9e3c4; } .bro { fill: #ddcaa8; } .pink { fill: #e8c8b9; } .shade { fill: #c9cbb9; }
.min { fill: none; stroke: #eeeee8; stroke-width: 4; }
.trail { fill: none; stroke: #b9c3a2; stroke-width: 2.500; }
.road { fill: none; stroke: #f2f2f1; stroke-width: 11; stroke-linejoin: round; filter: drop-shadow(0 0 2px #b8b8a4); }
.place text { font-size: 36px; fill: #6a6e9d; stroke: #e8e9e5; stroke-width: 4; paint-order: stroke; }
.street { font-size: 33px; fill: #343434; stroke: #f0f0ea; stroke-width: 5; paint-order: stroke; }
.lake { font-size: 38px; font-style: italic; fill: #c3e1f8; }
.harju { font-size: 34px; fill: #54754a; stroke: #d7e8cc; stroke-width: 3; paint-order: stroke; }
.city { font-size: 50px; font-weight: 500; fill: #0a0a0a; stroke: #fff; stroke-width: 6; paint-order: stroke; }
.poi { font-size: 34px; fill: #806675; stroke: #eee8e6; stroke-width: 5; paint-order: stroke; }
.hosp { font-size: 33px; font-weight: 500; fill: #c25142; stroke: #f4e4dc; stroke-width: 5; paint-order: stroke; }
.shield { fill: #cb5a5e; stroke: #fff; stroke-width: 3; }
.shield text { fill: #fff; stroke: none; font-size: 26px; font-weight: 700; text-anchor: middle; }
.word { font: 700 45px "Open Sans", sans-serif; fill: #fff; stroke: #42799f; stroke-width: 8; stroke-linejoin: round; paint-order: stroke; }

.foot { height: 168px; flex: none; background: #ececec; padding: 25px 28px 0; display: flex; }
.col { display: flex; flex-direction: column; }
.c1 { width: 107px; }
.foot h3 { font-size: 13.2px; line-height: 24px; font-weight: 700; letter-spacing: .35px; color: #85858d; white-space: nowrap; }
.foot a { font-size: 13px; line-height: 20px; margin-top: 8px; letter-spacing: .1px; color: #2d2d42; white-space: nowrap; }
.foot h3 + a { margin-top: 14px; }
.gh { margin-top: 15px; }
.top { align-items: center; }
.top svg { margin-top: 19px; }
```
